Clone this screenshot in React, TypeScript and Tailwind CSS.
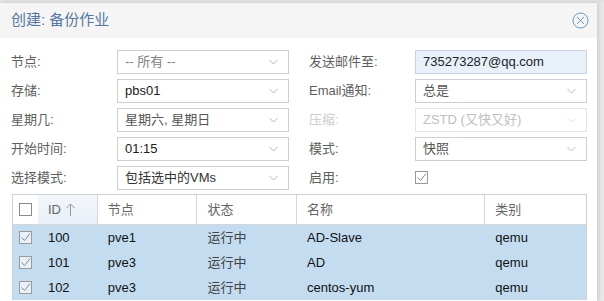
import React from "react";

const font = { fontFamily: '"Liberation Sans", Arial, "Noto Sans CJK SC", sans-serif' };

function Chevron({ light }: { light?: boolean }) {
  return (
    <svg width="9" height="5" viewBox="0 0 9 5" className="absolute right-[10px] top-1/2 -translate-y-1/2">
      <polyline points="0.5,0.5 4.5,4.5 8.5,0.5" fill="none" stroke={light ? "#e3e3e3" : "#b8b8b8"} strokeWidth="1" />
    </svg>
  );
}

function Field({ value, combo = true, disabled, highlight, tone = "text-[#222]" }: { value: string; combo?: boolean; disabled?: boolean; highlight?: boolean; tone?: string }) {
  return (
    <div
      className={`relative h-[24px] w-[172px] border flex items-center pl-[7px] text-[13px] ${
        highlight ? "bg-[#e8f0fa] border-[#c8d4e2]" : "bg-white border-[#cfcfcf]"
      } ${disabled ? "text-[#c0c0c0] border-[#e3e3e3]" : tone}`}
    >
      {value}
      {combo && <Chevron light={disabled} />}
    </div>
  );
}

function Row({ label, children, disabled }: { label: string; children: React.ReactNode; disabled?: boolean }) {
  return (
    <div className="flex items-center h-[29px]">
      <div className={`w-[106px] text-[13px] ${disabled ? "text-[#cccccc]" : "text-[#5e5e5e]"}`}>{label}</div>
      {children}
    </div>
  );
}

function Check({ checked, header }: { checked?: boolean; header?: boolean }) {
  return (
    <div className={`w-[13px] h-[13px] border ${header ? "border-[#8a8a8a] bg-white" : "border-[#9a9a9a] bg-[#e8f1f9]"} flex items-center justify-center`}>
      {checked && (
        <svg width="11" height="11" viewBox="0 0 11 11">
          <polyline points="1.5,5.5 4.5,8.5 10,1.5" fill="none" stroke="#8a8a8a" strokeWidth="1" />
        </svg>
      )}
    </div>
  );
}

const cols = ["w-[25px]", "w-[60px]", "w-[100px]", "w-[100px]", "w-[189px]", "w-[101px]"];

const rows = [
  ["100", "pve1", "运行中", "AD-Slave", "qemu"],
  ["101", "pve3", "运行中", "AD", "qemu"],
  ["102", "pve3", "运行中", "centos-yum", "qemu"],
];

export default function App() {
  return (
    <div className="w-[604px] h-[301px] overflow-hidden bg-[#e9e9e9]" style={font}>
      <div className="h-[3px] bg-[#e2e2e2]" />
      <div className="w-[597px] h-[298px] bg-white shadow-[2px_0_4px_rgba(0,0,0,0.12)]">
        <div className="h-[35px] bg-[#f5f5f5] flex items-center justify-between pl-[11px] pr-[8px]">
          <span className="text-[15px] text-[#5677a2]">创建: 备份作业</span>
          <svg width="17" height="17" viewBox="0 0 17 17">
            <circle cx="8.5" cy="8.5" r="7.5" fill="none" stroke="#6b93c2" strokeWidth="1" />
            <line x1="5" y1="5" x2="12" y2="12" stroke="#6b93c2" strokeWidth="1" />
            <line x1="12" y1="5" x2="5" y2="12" stroke="#6b93c2" strokeWidth="1" />
          </svg>
        </div>
        <div className="pt-[9px] pl-[11px]">
          <div className="flex gap-[20px]">
            <div>
              <Row label="节点:"><Field value="-- 所有 --" tone="text-[#808080]" /></Row>
              <Row label="存储:"><Field value="pbs01" /></Row>
              <Row label="星期几:"><Field value="星期六, 星期日" tone="text-[#555]" /></Row>
              <Row label="开始时间:"><Field value="01:15" /></Row>
              <Row label="选择模式:"><Field value="包括选中的VMs" tone="text-[#333]" /></Row>
            </div>
            <div>
              <Row label="发送邮件至:"><Field value="735273287@qq.com" combo={false} highlight /></Row>
              <Row label="Email通知:"><Field value="总是" tone="text-[#555]" /></Row>
              <Row label="压缩:" disabled><Field value="ZSTD (又快又好)" disabled /></Row>
              <Row label="模式:"><Field value="快照" tone="text-[#555]" /></Row>
              <Row label="启用:">
                <div className="w-[13px] h-[13px] border border-[#9a9a9a] flex items-center justify-center">
                  <svg width="11" height="11" viewBox="0 0 11 11">
                    <polyline points="1.5,5.5 4.5,8.5 10,1.5" fill="none" stroke="#8a8a8a" strokeWidth="1" />
                  </svg>
                </div>
              </Row>
            </div>
          </div>
          <div className="mt-[2px] ml-[1px] w-[575px] border-t border-x border-[#d0d0d0]">
            <div className="flex h-[30px] border-b border-[#d6d6d6] text-[13px] text-[#666]">
              <div className={`${cols[0]} flex items-center justify-center`}><Check header /></div>
              <div className={`${cols[1]} flex items-center pl-[10px] bg-gradient-to-b from-[#f2f6fb] to-[#e8eff7] border-r border-[#d6d6d6]`}>
                ID
                <svg width="9" height="13" viewBox="0 0 9 13" className="ml-[5px]">
                  <line x1="4.5" y1="1" x2="4.5" y2="13" stroke="#999" strokeWidth="1" />
                  <polyline points="0.5,5 4.5,1 8.5,5" fill="none" stroke="#999" strokeWidth="1" />
                </svg>
              </div>
              <div className={`${cols[2]} flex items-center pl-[10px] border-r border-[#d6d6d6]`}>节点</div>
              <div className={`${cols[3]} flex items-center pl-[10px] border-r border-[#d6d6d6]`}>状态</div>
              <div className={`${cols[4]} flex items-center pl-[10px] border-r border-[#d6d6d6]`}>名称</div>
              <div className={`${cols[5]} flex items-center pl-[10px]`}>类别</div>
            </div>
            {rows.map((r) => (
              <div key={r[0]} className="flex h-[25px] bg-[#c4dcf0] text-[13px] text-[#111]">
                <div className={`${cols[0]} flex items-center justify-center`}><Check checked /></div>
                <div className={`${cols[1]} flex items-center pl-[10px]`}>{r[0]}</div>
                <div className={`${cols[2]} flex items-center pl-[10px]`}>{r[1]}</div>
                <div className={`${cols[3]} flex items-center pl-[10px] text-[#444]`}>{r[2]}</div>
                <div className={`${cols[4]} flex items-center pl-[10px]`}>{r[3]}</div>
                <div className={`${cols[5]} flex items-center pl-[10px]`}>{r[4]}</div>
              </div>
            ))}
          </div>
        </div>
      </div>
    </div>
  );
}
